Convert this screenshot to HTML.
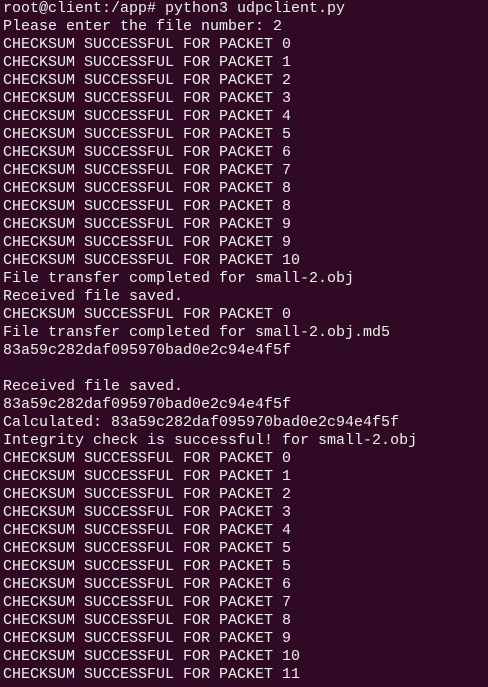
<!DOCTYPE html>
<html><head><meta charset="utf-8"><style>
html,body{margin:0;padding:0;background:#300a24;width:488px;height:687px;overflow:hidden}
pre{margin:0;position:absolute;left:3px;top:0px;font-family:"Liberation Mono",monospace;font-size:15px;line-height:18px;color:#eeeeec}
</style></head><body><pre>root@client:/app# python3 udpclient.py
Please enter the file number: 2
CHECKSUM SUCCESSFUL FOR PACKET 0
CHECKSUM SUCCESSFUL FOR PACKET 1
CHECKSUM SUCCESSFUL FOR PACKET 2
CHECKSUM SUCCESSFUL FOR PACKET 3
CHECKSUM SUCCESSFUL FOR PACKET 4
CHECKSUM SUCCESSFUL FOR PACKET 5
CHECKSUM SUCCESSFUL FOR PACKET 6
CHECKSUM SUCCESSFUL FOR PACKET 7
CHECKSUM SUCCESSFUL FOR PACKET 8
CHECKSUM SUCCESSFUL FOR PACKET 8
CHECKSUM SUCCESSFUL FOR PACKET 9
CHECKSUM SUCCESSFUL FOR PACKET 9
CHECKSUM SUCCESSFUL FOR PACKET 10
File transfer completed for small-2.obj
Received file saved.
CHECKSUM SUCCESSFUL FOR PACKET 0
File transfer completed for small-2.obj.md5
83a59c282daf095970bad0e2c94e4f5f

Received file saved.
83a59c282daf095970bad0e2c94e4f5f
Calculated: 83a59c282daf095970bad0e2c94e4f5f
Integrity check is successful! for small-2.obj
CHECKSUM SUCCESSFUL FOR PACKET 0
CHECKSUM SUCCESSFUL FOR PACKET 1
CHECKSUM SUCCESSFUL FOR PACKET 2
CHECKSUM SUCCESSFUL FOR PACKET 3
CHECKSUM SUCCESSFUL FOR PACKET 4
CHECKSUM SUCCESSFUL FOR PACKET 5
CHECKSUM SUCCESSFUL FOR PACKET 5
CHECKSUM SUCCESSFUL FOR PACKET 6
CHECKSUM SUCCESSFUL FOR PACKET 7
CHECKSUM SUCCESSFUL FOR PACKET 8
CHECKSUM SUCCESSFUL FOR PACKET 9
CHECKSUM SUCCESSFUL FOR PACKET 10
CHECKSUM SUCCESSFUL FOR PACKET 11</pre></body></html>
